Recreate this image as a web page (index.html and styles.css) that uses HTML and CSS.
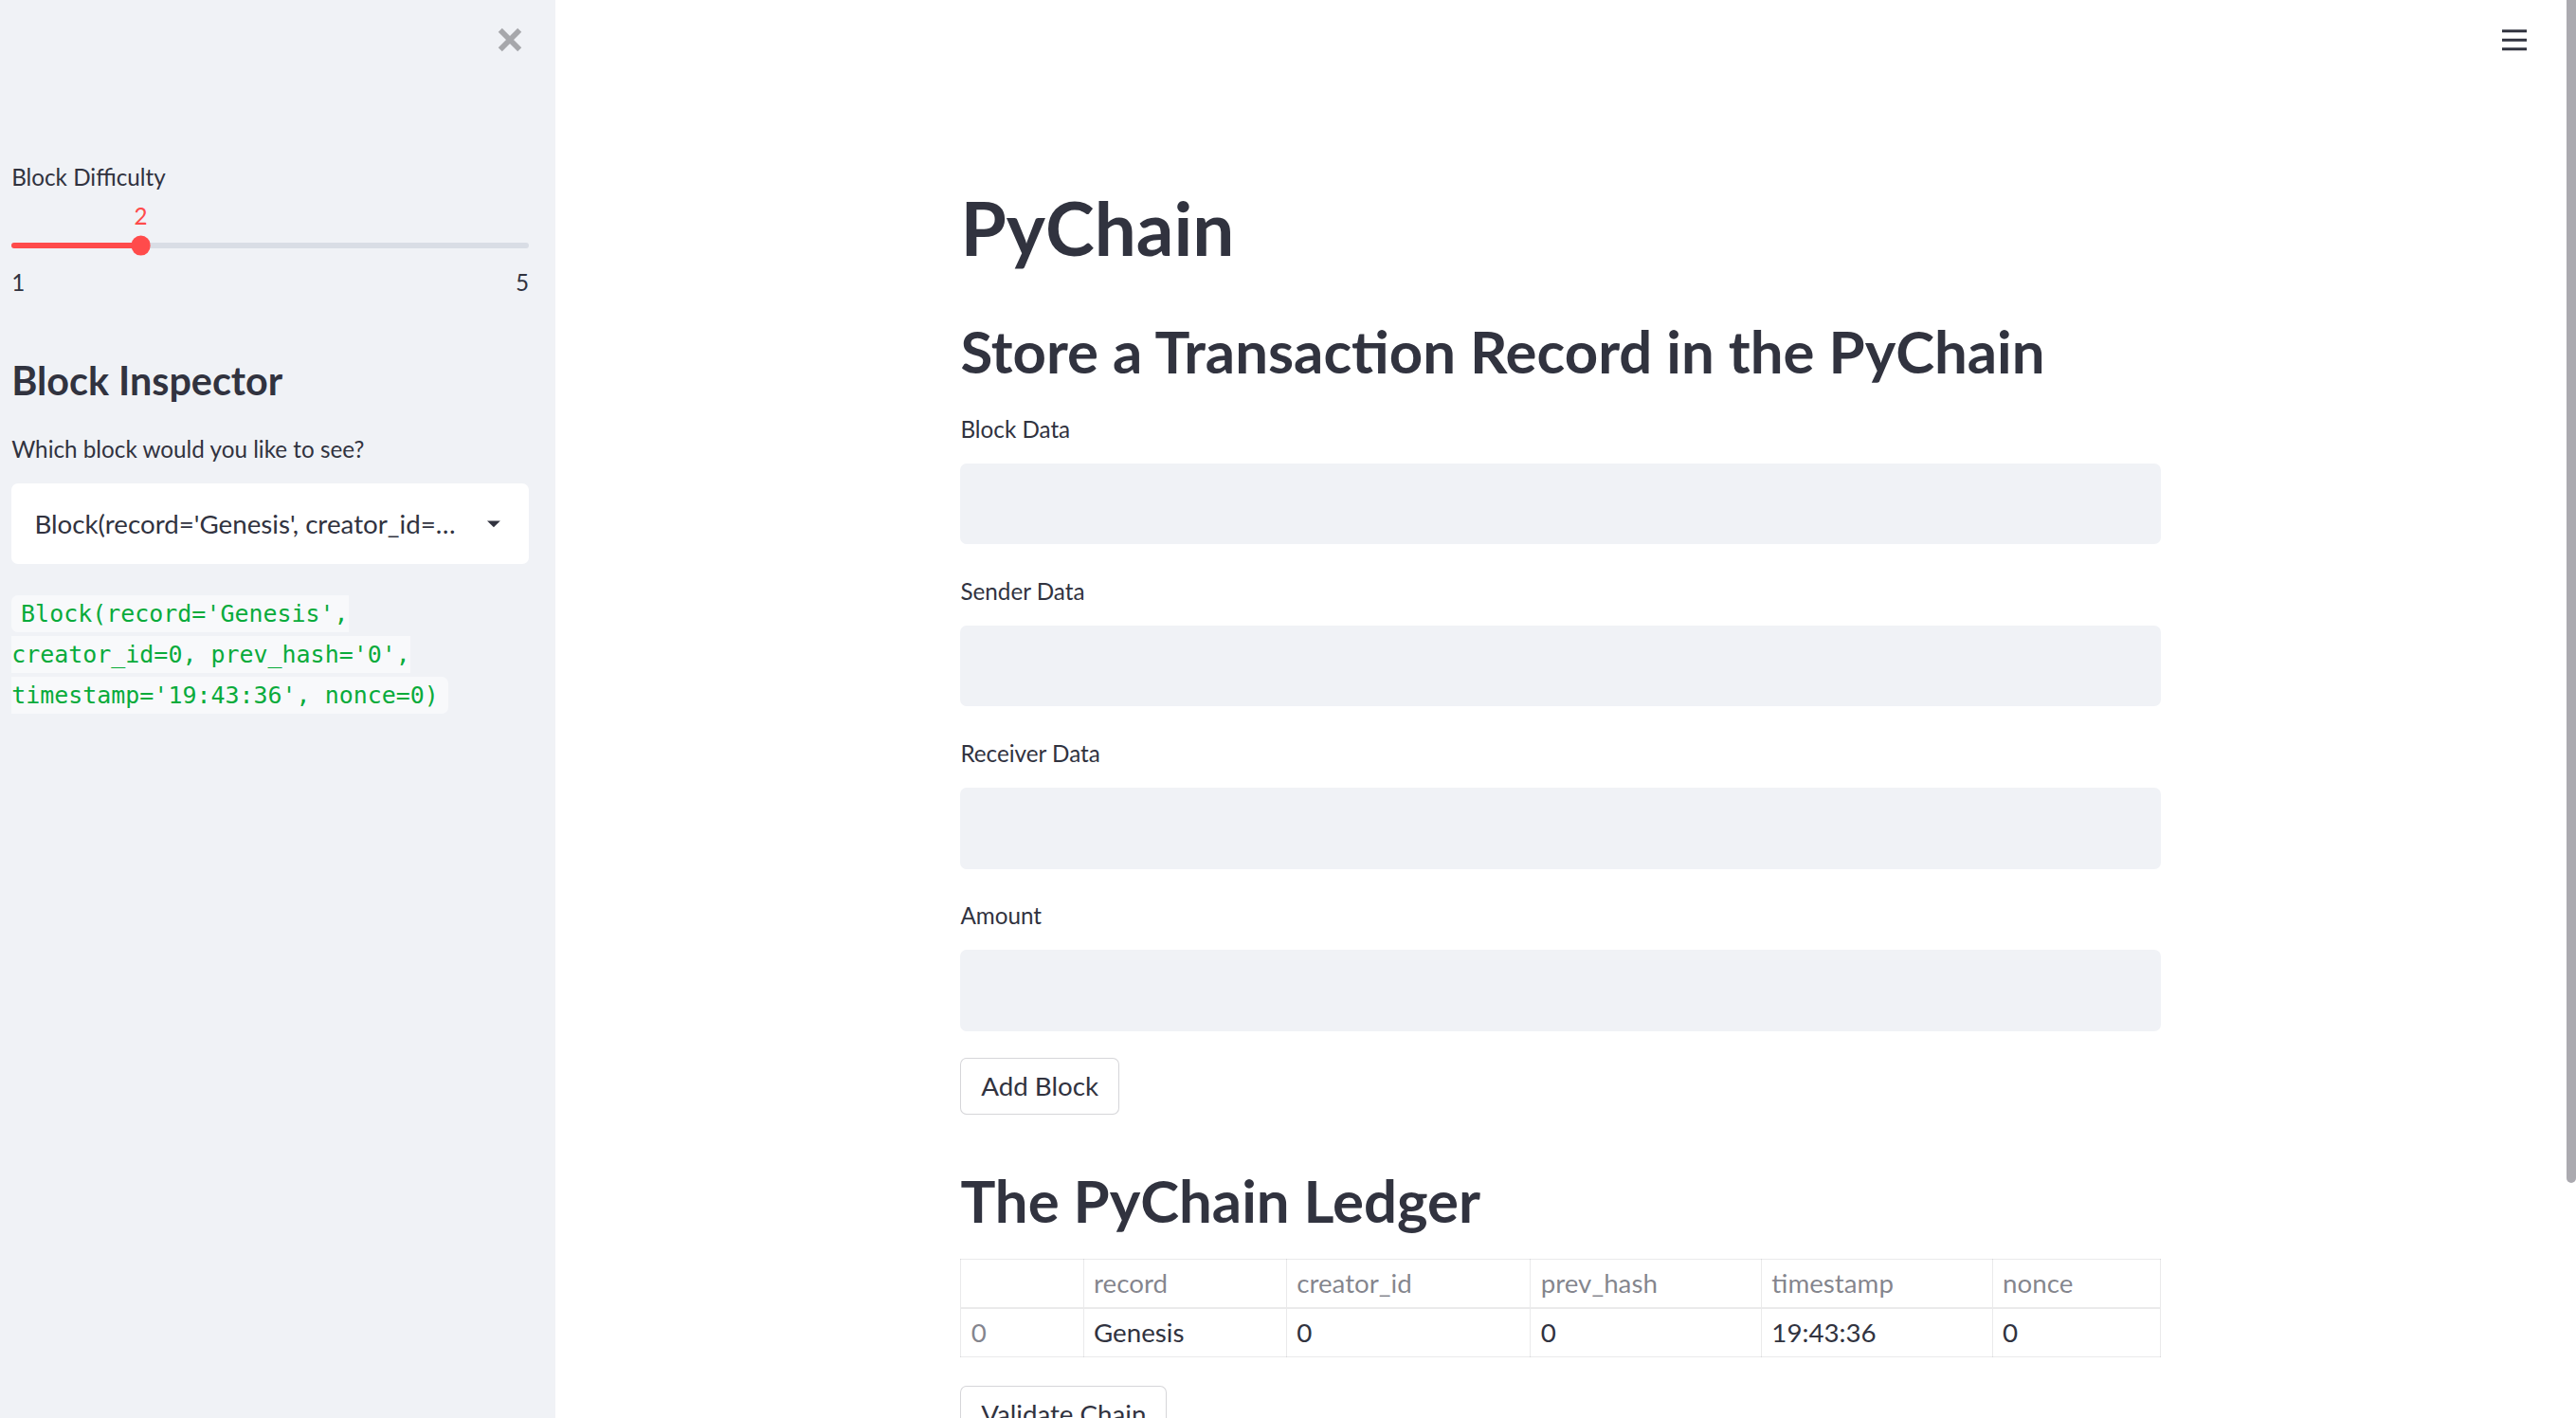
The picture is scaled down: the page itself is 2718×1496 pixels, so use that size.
FILE: index.html
```html
<!DOCTYPE html>
<html lang="en">
<head>
<meta charset="utf-8">
<title>PyChain</title>
<link rel="stylesheet" href="styles.css">
</head>
<body>
<div class="app">
  <aside class="sidebar">
    <div class="sb-head">
      <button class="close-btn" aria-label="Close sidebar">
        <svg viewBox="0 0 15 15"><path d="M1.6 1.6 L13.4 13.4 M13.4 1.6 L1.6 13.4" stroke="#a6a7ab" stroke-width="3.3" fill="none"/></svg>
      </button>
    </div>
    <div class="sb-content">
      <div class="slider-field">
        <label class="lbl">Block Difficulty</label>
        <div class="slider">
          <div class="slider-value-row"><span class="slider-value" style="left:25%">2</span></div>
          <div class="track">
            <div class="fill" style="width:25%"></div>
            <div class="thumb" style="left:25%"></div>
          </div>
          <div class="ticks"><span>1</span><span>5</span></div>
        </div>
      </div>
      <h2 class="sb-h2">Block Inspector</h2>
      <p class="sb-text">Which block would you like to see?</p>
      <div class="select">
        <span class="select-text">Block(record='Genesis', creator_id=…</span>
        <svg class="caret" viewBox="0 0 10 5"><path d="M0 0 L10 0 L5 5 Z" fill="#31333f"/></svg>
      </div>
      <p class="code-p"><code>Block(record='Genesis', creator_id=0, prev_hash='0', timestamp='19:43:36', nonce=0)</code></p>
    </div>
  </aside>
  <main class="main">
    <div class="main-head">
      <button class="menu-btn" aria-label="Menu">
        <svg viewBox="0 0 15 13"><path d="M0 1 H15 M0 6.5 H15 M0 12 H15" stroke="#31333f" stroke-width="1.8" fill="none"/></svg>
      </button>
    </div>
    <div class="block">
      <h1 class="h1">PyChain</h1>
      <h2 class="h2">Store a Transaction Record in the PyChain</h2>
      <div class="fields">
        <div class="field"><label class="lbl">Block Data</label><input class="text-input" type="text"></div>
        <div class="field"><label class="lbl">Sender Data</label><input class="text-input" type="text"></div>
        <div class="field"><label class="lbl">Receiver Data</label><input class="text-input" type="text"></div>
        <div class="field"><label class="lbl">Amount</label><input class="text-input" type="text"></div>
      </div>
      <button class="btn btn-add">Add Block</button>
      <h2 class="h2 h2-ledger">The PyChain Ledger</h2>
      <table class="ledger">
        <thead>
          <tr><th></th><th>record</th><th>creator_id</th><th>prev_hash</th><th>timestamp</th><th>nonce</th></tr>
        </thead>
        <tbody>
          <tr><th>0</th><td>Genesis</td><td>0</td><td>0</td><td>19:43:36</td><td>0</td></tr>
        </tbody>
      </table>
      <button class="btn btn-validate">Validate Chain</button>
    </div>
  </main>
  <div class="scrollbar"><div class="scroll-thumb"></div></div>
</div>
</body>
</html>
```
FILE: styles.css
```css
html { font-size: 27.734px; }
body {
  margin: 0;
  font-family: Lato, "Noto Sans", sans-serif;
  color: #31333f;
  background: #ffffff;
}
.app { display: flex; height: 100vh; overflow: hidden; }

/* sidebar */
.sidebar { width: 21.125rem; flex: none; background: #f0f2f6; }
.sb-head { display: flex; justify-content: flex-end; padding: 1.0625rem 1.25rem 0 0; }
.close-btn, .menu-btn { border: 0; background: none; padding: 0; margin: 0; display: block; cursor: pointer; }
.close-btn svg { display: block; width: .9375rem; height: .9375rem; }
.sb-content { padding: 4.09rem 1rem 0 .4375rem; }
.lbl { display: block; font-size: .875rem; line-height: 1.3125rem; }
.slider { margin-top: .1875rem; }
.slider-value-row { position: relative; height: 1.3125rem; }
.slider-value {
  position: absolute; top: 0; transform: translateX(-50%);
  color: #ff4b4b; font-size: .875rem; line-height: 1.3125rem;
}
.track { position: relative; height: .25rem; margin-top: .3125rem; background: #d9dde5; border-radius: .125rem; }
.fill { height: 100%; background: #ff4b4b; border-radius: .125rem; }
.thumb {
  position: absolute; top: 50%; width: .75rem; height: .75rem; border-radius: 50%;
  background: #ff4b4b; transform: translate(-50%, -50%);
}
.ticks { display: flex; justify-content: space-between; margin-top: .625rem; font-size: .875rem; line-height: 1.3125rem; }
.sb-h2 { font-size: 1.49rem; font-weight: 700; line-height: 1.2; margin: 2.2rem 0 0; }
.sb-text { font-size: .875rem; line-height: 1.3125rem; margin: 1.05rem 0 0; }
.select {
  margin-top: .65625rem; height: 3.0625rem; background: #ffffff; border-radius: .25rem;
  display: flex; align-items: center; justify-content: space-between;
  padding: 0 1.1rem 0 .875rem;
}
.select-text { font-size: 1rem; white-space: nowrap; }
.caret { display: block; width: .5rem; height: .28rem; }
.code-p {
  margin: 1.15rem 0 0; font-size: .9rem; line-height: 1.5375rem;
  font-family: "DejaVu Sans Mono", "Liberation Mono", monospace;
}
.code-p code {
  font-family: inherit; font-size: 1em; color: #09ab3b; background: #f8f9fb;
  padding: .2em .4em; border-radius: .25rem;
}

/* main */
.main { flex: 1; min-width: 0; overflow: hidden; display: flex; flex-direction: column; }
.main-head { display: flex; justify-content: flex-end; padding: 1.125rem 1.5rem 0 0; }
.menu-btn svg { display: block; width: .9375rem; height: .8125rem; }
.block { width: 45.6875rem; margin: 0 auto; padding-top: 5.075rem; }
.h1 { font-size: 2.82rem; font-weight: 700; line-height: 1.2; margin: 0; }
.h2 { font-size: 2.225rem; font-weight: 700; line-height: 1.2; margin: 1.62rem 0 0; }
.fields { margin-top: 1rem; display: flex; flex-direction: column; gap: 1.142rem; }
.field .lbl { margin-bottom: .62rem; }
.text-input {
  display: block; box-sizing: border-box; width: 100%; height: 3.09375rem;
  border: 0; border-radius: .25rem; background: #f0f2f6; outline: none; margin: 0;
}
.btn {
  display: block; font-family: inherit; font-size: 1rem; line-height: 1.6; color: #31333f;
  background: #ffffff; border: 1px solid rgba(49, 51, 63, .2); border-radius: .25rem;
  padding: .25rem .75rem; margin: 0;
}
.btn-add { margin-top: 1.03rem; }
.h2-ledger { margin-top: 1.9rem; }
.ledger {
  width: 100%; margin-top: .9rem; border-collapse: collapse; table-layout: fixed;
  font-size: 1rem;
}
.ledger th, .ledger td {
  border: 1px solid rgba(49, 51, 63, .1); padding: .25rem .375rem; text-align: left;
  font-weight: 400; line-height: 1.3rem; vertical-align: middle;
}
.ledger thead th { color: rgba(49, 51, 63, .6); border-bottom-width: 2px; }
.ledger tbody th { color: rgba(49, 51, 63, .6); }
.ledger thead th:nth-child(1) { width: 3.875rem; }
.ledger thead th:nth-child(2) { width: 6.9375rem; }
.ledger thead th:nth-child(3) { width: 8.5rem; }
.ledger thead th:nth-child(4) { width: 8rem; }
.ledger thead th:nth-child(5) { width: 8rem; }
.btn-validate { margin-top: 1.09rem; }

/* scrollbar */
.scrollbar { width: 10px; flex: none; background: #ffffff; }
.scroll-thumb { height: 83.4%; background: #abaab0; border-radius: 0 0 5px 5px; }
```
